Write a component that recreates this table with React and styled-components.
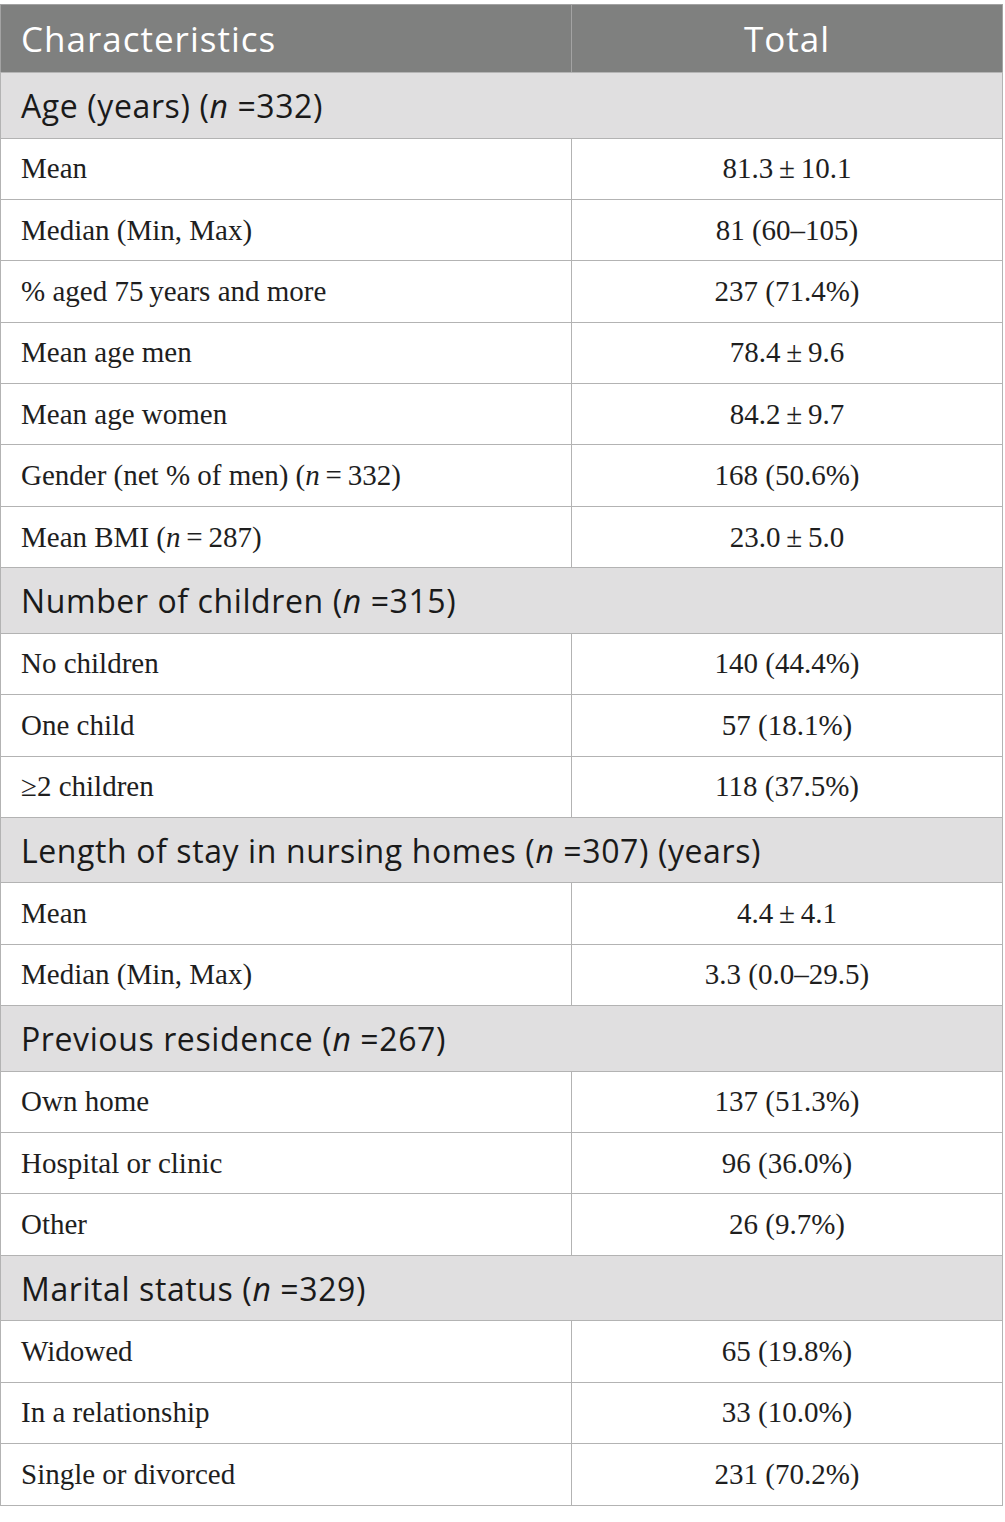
import React from 'react'
import styled, { createGlobalStyle } from 'styled-components'

const getSections = () => [
    {
        title: <>Age (years) (<I>n</I> =332)</>,
        rows: [
            ['Mean', '81.3\u2009±\u200910.1'],
            ['Median (Min, Max)', '81 (60–105)'],
            ['% aged 75\u2009years and more', '237 (71.4%)'],
            ['Mean age men', '78.4\u2009±\u20099.6'],
            ['Mean age women', '84.2\u2009±\u20099.7'],
            [<>Gender (net % of men) (<I>n</I>{'\u2009=\u2009'}332)</>, '168 (50.6%)'],
            [<>Mean BMI (<I>n</I>{'\u2009=\u2009'}287)</>, '23.0\u2009±\u20095.0'],
        ],
    },
    {
        title: <>Number of children (<I>n</I> =315)</>,
        rows: [
            ['No children', '140 (44.4%)'],
            ['One child', '57 (18.1%)'],
            ['≥2 children', '118 (37.5%)'],
        ],
    },
    {
        title: <>Length of stay in nursing homes (<I>n</I> =307) (years)</>,
        rows: [
            ['Mean', '4.4\u2009±\u20094.1'],
            ['Median (Min, Max)', '3.3 (0.0–29.5)'],
        ],
    },
    {
        title: <>Previous residence (<I>n</I> =267)</>,
        rows: [
            ['Own home', '137 (51.3%)'],
            ['Hospital or clinic', '96 (36.0%)'],
            ['Other', '26 (9.7%)'],
        ],
    },
    {
        title: <>Marital status (<I>n</I> =329)</>,
        rows: [
            ['Widowed', '65 (19.8%)'],
            ['In a relationship', '33 (10.0%)'],
            ['Single or divorced', '231 (70.2%)'],
        ],
    },
]

export default function App() {
    const sections = getSections()
    return (
        <>
            <GlobalStyle />
            <Wrap>
                <Table>
                    <colgroup>
                        <col style={{ width: 571 }} />
                        <col />
                    </colgroup>
                    <thead>
                        <tr>
                            <Th>Characteristics</Th>
                            <Th $center>Total</Th>
                        </tr>
                    </thead>
                    <tbody>
                        {sections.map((s, i) => (
                            <React.Fragment key={i}>
                                <tr>
                                    <SectionCell colSpan={2}>{s.title}</SectionCell>
                                </tr>
                                {s.rows.map((r, j) => (
                                    <tr key={j}>
                                        <Td>{r[0]}</Td>
                                        <Td $center>{r[1]}</Td>
                                    </tr>
                                ))}
                            </React.Fragment>
                        ))}
                    </tbody>
                </Table>
            </Wrap>
        </>
    )
}

const GlobalStyle = createGlobalStyle`
    body {
        margin: 0;
        background: #fff;
    }
`
const Wrap = styled.div`
    padding: 4px 2px 0 0;
`
const Table = styled.table`
    width: 1003px;
    border-collapse: collapse;
    table-layout: fixed;
`
const I = styled.i`
    font-style: italic;
`
const Th = styled.th`
    height: 67px;
    padding: 0 20px;
    background: #7f807f;
    color: #fff;
    font-family: "Open Sans", Lato, sans-serif;
    font-weight: 400;
    font-size: 35px;
    letter-spacing: 1px;
    text-align: ${p => (p.$center ? 'center' : 'left')};
    border: 1px solid #a3a3a3;
    border-bottom-color: #b5b5b5;
`
const SectionCell = styled.td`
    height: 64.5px;
    padding: 0 20px;
    background: #e0dfe0;
    color: #1a1a1a;
    font-family: "Open Sans", Lato, sans-serif;
    font-size: 32px;
    letter-spacing: 0.6px;
    border: 1px solid #b3b3b3;
`
const Td = styled.td`
    height: 60.4px;
    padding: 0 20px;
    color: #1e1e1e;
    font-family: "Liberation Serif", serif;
    font-size: 29px;
    text-align: ${p => (p.$center ? 'center' : 'left')};
    border: 1px solid #b3b3b3;
`
